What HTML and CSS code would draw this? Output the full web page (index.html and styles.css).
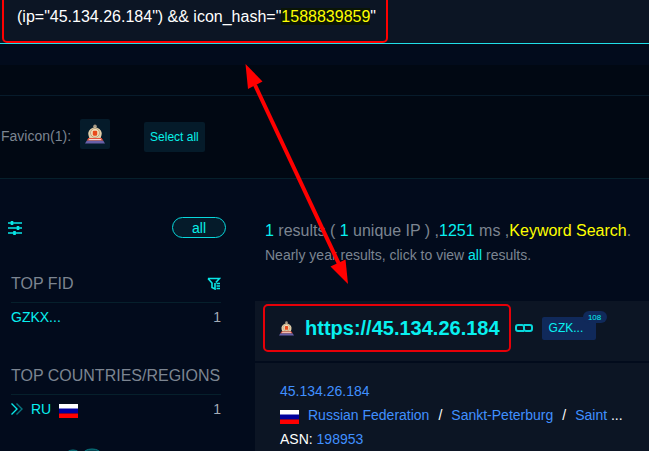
FILE: index.html
```html
<!DOCTYPE html>
<html lang="en">
<head>
    <meta charset="UTF-8">
    <meta name="viewport" content="width=device-width, initial-scale=1.0">
    <title>Search results</title>
    <link rel="stylesheet" href="styles.css">
</head>
<body>
    <svg class="symbols" aria-hidden="true">
        <symbol id="favicon" viewBox="0 0 18 18">
            <circle cx="9" cy="2" r="1.6" fill="#a89a86"/>
            <path d="M4 13 Q1.500 7 5 4.500 Q9 1.500 13 4.500 Q16.500 7 14 13Z" fill="#e2cfaa"/>
            <circle cx="9" cy="8" r="4" fill="#f3dfba" stroke="#b39c78" stroke-width="0.8"/>
            <rect x="7" y="6" width="4" height="4.500" rx="1" fill="#e84a1c"/>
            <path d="M3 12.500h12l1.500 2.500h-15z" fill="#e5523c"/>
            <path d="M4 13.500h10l1 1.200H3z" fill="#f2ddd8"/>
            <path d="M1.500 15h15l1.500 2.500H0z" fill="#6860a8"/>
        </symbol>
        <symbol id="flag-ru" viewBox="0 0 19 14">
            <path d="M0 0h19v5H0z" fill="#fff"/>
            <path d="M0 4.500h19v5H0z" fill="#00009c"/>
            <path d="M0 9.500h19V14H0z" fill="#f00"/>
        </symbol>
    </svg>

    <header class="search">
        <div class="query" role="textbox" aria-label="Search query" contenteditable="true" spellcheck="false">(ip="45.134.26.184") &amp;&amp; icon_hash="<mark>1588839859</mark>"</div>
        <span class="mark-query"></span>
    </header>

    <div class="toolbar"></div>

    <section class="favicons">
        <span class="favicons-label">Favicon(1):</span>
        <button class="favicon-btn" type="button" aria-label="Favicon"><svg width="20" height="20"><use href="#favicon"/></svg></button>
        <button class="select-all" type="button">Select all</button>
    </section>

    <main class="content">
        <aside class="sidebar">
            <div class="filter-row">
                <button class="icon-btn" type="button" aria-label="Filters">
                    <svg width="14" height="14" viewBox="0 0 14 14" fill="none" stroke="#08e8e8">
                        <path d="M0 2h14M0 7h14M0 12h14" stroke-width="1.600"/>
                        <path d="M4 0v4M10 5v4M6.500 10v4" stroke-width="2.600"/>
                    </svg>
                </button>
                <button class="pill" type="button">all</button>
            </div>
            <section class="facet">
                <h2>TOP FID
                    <button class="icon-btn" type="button" aria-label="Filter FID">
                        <svg width="14" height="13" viewBox="0 0 14 13" fill="none" stroke="#08e8e8" stroke-width="1.600">
                            <path d="M1 1.500h11.500L8.800 5.500M1 1.500l4 4.500v4.500l3 1.500V6"/>
                            <path d="M9.500 6.500h3.500M9.500 9h3.500M9.500 11.500h3.500"/>
                        </svg>
                    </button>
                </h2>
                <div class="facet-row"><a href="#">GZKX...</a><span class="count">1</span></div>
            </section>
            <section class="facet">
                <h2>TOP COUNTRIES/REGIONS</h2>
                <div class="facet-row">
                    <svg width="12" height="12" viewBox="0 0 12 12" fill="none" stroke-width="1.400">
                        <path d="M5.500 0.500L11 6l-5.500 5.500" stroke="#08757f"/>
                        <path d="M0.500 0.500L6 6l-5.500 5.500" stroke="#08e8e8"/>
                    </svg>
                    <a href="#">RU</a>
                    <svg class="flag" width="19" height="14"><use href="#flag-ru"/></svg>
                    <span class="count">1</span>
                </div>
            </section>
            <svg class="map" width="40" height="3" viewBox="0 0 40 3" fill="#064653" stroke="#087b83">
                <ellipse cx="8" cy="7" rx="7" ry="5"/>
                <ellipse cx="27" cy="6" rx="9" ry="5"/>
            </svg>
        </aside>

        <section class="results">
            <p class="summary"><b>1</b> results ( <b>1</b> unique IP ) ,<b>1251</b> ms ,<em>Keyword Search</em>.</p>
            <p class="note">Nearly year results, click to view <a href="#">all</a> results.</p>

            <article class="card">
                <header class="card-head">
                    <div class="host">
                        <svg width="15" height="15"><use href="#favicon"/></svg>
                        <a href="#">https://45.134.26.184</a>
                        <span class="mark-host"></span>
                    </div>
                    <button class="icon-btn" type="button" aria-label="Copy link">
                        <svg width="18" height="10" viewBox="0 0 18 10" fill="none" stroke="#08d8dc" stroke-width="2">
                            <path d="M9 8H3a2 2 0 0 1-2-2V4a2 2 0 0 1 2-2h4a2 2 0 0 1 2 2v2"/>
                            <path d="M9 2h6a2 2 0 0 1 2 2v2a2 2 0 0 1-2 2h-4a2 2 0 0 1-2-2V4"/>
                        </svg>
                    </button>
                    <a class="tag" href="#">GZK...<span class="badge">108</span></a>
                </header>
                <div class="card-body">
                    <a href="#">45.134.26.184</a>
                    <div class="place">
                        <svg class="flag" width="19" height="14"><use href="#flag-ru"/></svg>
                        <a href="#">Russian Federation</a><span>/</span><a href="#">Sankt-Peterburg</a><span>/</span><span class="city"><a href="#">Saint</a> ...</span>
                    </div>
                    <div>ASN: <a href="#">198953</a></div>
                </div>
            </article>
        </section>
    </main>

    <svg class="arrow" width="104" height="222" viewBox="0 0 104 222" fill="#f00" aria-hidden="true">
        <path d="M10 21L94 200" stroke="#f00" stroke-width="4"/>
        <path d="M0.500 0L17.500 17.500L3 25z"/>
        <path d="M103 220L85.500 202.500L100.500 195.500z"/>
    </svg>
</body>
</html>
```
FILE: styles.css
```css
* {
    box-sizing: border-box;
}
body {
    margin: 0;
    position: relative;
    background-color: #020b1c;
    color: #7c8591;
    font-family: "Liberation Sans", Arial, sans-serif;
    font-size: 14px;
    line-height: 24px;
}
a {
    color: #08f0f0;
    text-decoration: none;
}
button {
    font: inherit;
    color: #08f0e8;
    padding: 0;
    border: none;
    background: none;
    cursor: pointer;
}
svg {
    display: block;
    flex: none;
}
h2, p {
    margin: 0;
    font-weight: normal;
}
.symbols {
    position: absolute;
    width: 0;
    height: 0;
}

/* search box */
.search {
    position: relative;
    background-color: #0c1524;
    border-bottom: 1px solid #20dfe8;
    padding: 5px 17px 14px;
}
.query {
    color: #fff;
    font-size: 16px;
    white-space: nowrap;
    outline: none;
}
.query mark {
    color: #ff0;
    background-color: #0b1505;
}
.mark-query {
    position: absolute;
    left: 2px;
    top: -8px;
    width: 386px;
    height: 51px;
    border: 2px solid #f00;
    border-radius: 5px;
}
.toolbar {
    height: 52px;
    border-bottom: 1px solid #071b2b;
    background: linear-gradient(#020b1c 21px, #010813 21px);
}

/* favicon bar */
.favicons {
    display: flex;
    align-items: center;
    height: 83px;
    padding-left: 1px;
    background-color: #010813;
    border-bottom: 1px solid #06202c;
}
.favicons-label {
    padding-bottom: 2px;
}
.favicon-btn {
    display: flex;
    align-items: center;
    justify-content: center;
    width: 30px;
    height: 30px;
    margin: 0 34px 6px 9px;
    background-color: #051b2a;
    border-radius: 2px;
}
.select-all {
    height: 30px;
    padding: 0 6px;
    background-color: #051b2a;
    border-radius: 2px;
    font-size: 12px;
}

.content {
    display: grid;
    grid-template-columns: 226px 1fr;
    gap: 29px;
}

/* sidebar */
.sidebar {
    padding: 38px 0 0 8px;
}
.filter-row {
    display: flex;
    align-items: center;
    justify-content: space-between;
    margin-bottom: 33px;
}
.pill {
    width: 54px;
    height: 21px;
    line-height: 18px;
    border: 1px solid #08d8dc;
    border-radius: 11px;
    background-color: #051b2a;
}
.facet {
    margin: 0 5px 32px 3px;
}
.facet h2 {
    display: flex;
    align-items: center;
    justify-content: space-between;
    height: 32px;
    padding-bottom: 6px;
    font-size: 16px;
    white-space: nowrap;
    border-bottom: 1px solid #06202c;
}
.facet-row {
    display: flex;
    align-items: center;
    height: 28px;
}
.facet-row a {
    margin: 0 8px;
}
.facet-row a:first-child {
    margin-left: 0;
}
.flag {
    margin-top: 4px;
}
.count {
    margin-left: auto;
    color: #a4abb5;
}
.map {
    margin: -7px 0 0 57px;
}

/* results */
.results {
    padding-top: 40px;
    min-width: 0;
}
.summary, .note {
    padding-left: 10px;
    white-space: nowrap;
}
.summary {
    font-size: 16px;
}
.summary b {
    color: #08f0f0;
    font-weight: normal;
}
.summary em {
    color: #ff0;
    font-style: normal;
}
.card {
    margin-top: 34px;
}
.card-head, .card-body {
    background-color: #0c1524;
}
.card-head {
    display: flex;
    align-items: center;
    height: 60px;
    padding: 0 8px 6px;
    margin-bottom: 2px;
}
.host {
    position: relative;
    display: flex;
    align-items: center;
    gap: 11px;
    height: 48px;
    padding: 0 11px 0 16px;
    margin-right: 4px;
    font-size: 20px;
    font-weight: bold;
}
.mark-host {
    position: absolute;
    inset: 0;
    border: 2px solid #e60008;
    border-radius: 5px;
    pointer-events: none;
}
.tag {
    position: relative;
    width: 54px;
    height: 23px;
    margin-left: 9px;
    padding-left: 7px;
    line-height: 23px;
    font-size: 12px;
    background-color: #10295a;
    border-radius: 2px;
}
.badge {
    position: absolute;
    top: -6px;
    right: -11px;
    width: 24px;
    height: 12px;
    border-radius: 6px;
    background-color: #10295a;
    font-size: 8px;
    line-height: 13px;
    text-align: center;
}
.card-body {
    padding: 16px 25px 0;
    color: #fff;
    white-space: nowrap;
}
.card-body a {
    color: #4090ff;
}
.place {
    display: flex;
    align-items: center;
    gap: 9px;
}

.arrow {
    position: absolute;
    left: 245px;
    top: 64px;
    pointer-events: none;
}
```
